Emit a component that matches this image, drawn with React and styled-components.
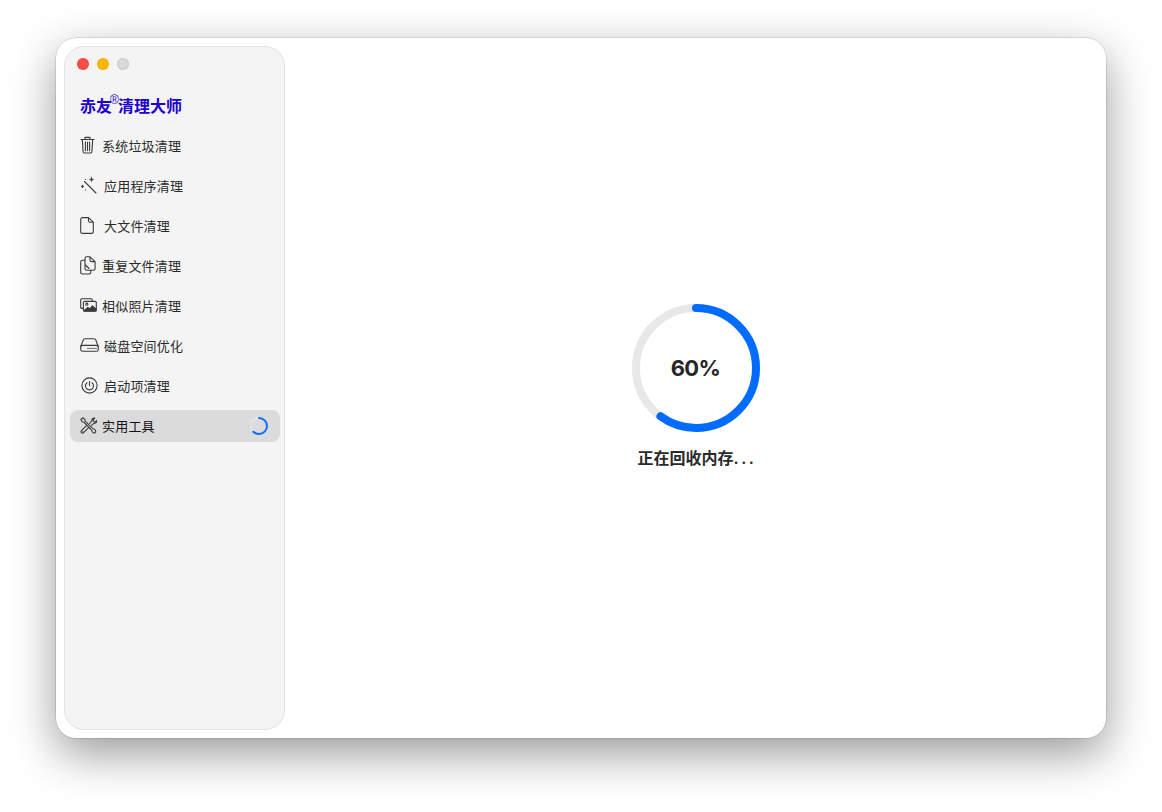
import styled, { createGlobalStyle } from "styled-components";

const GlobalStyle = createGlobalStyle`
  html, body {
    margin: 0;
    padding: 0;
    background: #fff;
  }
  body {
    font-family: "Inter", "Noto Sans CJK SC", sans-serif;
  }
`;
const Page = styled.div`
  width: 1162px;
  height: 812px;
  padding: 38px 56px;
  box-sizing: border-box;
  overflow: hidden;
`;
const Window = styled.div`
  width: 1050px;
  height: 700px;
  padding: 8px;
  box-sizing: border-box;
  display: flex;
  background: #fff;
  border-radius: 20px;
  box-shadow: 0 0 0 0.5px rgba(0, 0, 0, 0.2), 0 16px 46px rgba(0, 0, 0, 0.4);
`;
const Sidebar = styled.aside`
  width: 221px;
  height: 684px;
  box-sizing: border-box;
  flex: none;
  padding: 11px 4px 0 5px;
  background: #f4f4f4;
  border: 1px solid #e2e2e2;
  border-radius: 20px;
`;
const Lights = styled.div`
  display: flex;
  gap: 8px;
  padding-left: 7px;
`;
const Light = styled.span`
  width: 12px;
  height: 12px;
  border-radius: 50%;
  box-sizing: border-box;
  background: ${(props) => props.color};
  border: 0.5px solid rgba(0, 0, 0, 0.08);
`;
const Title = styled.h1`
  margin: 23px 0 0;
  padding-left: 10px;
  height: 24px;
  display: flex;
  align-items: center;
  color: #2200cc;
  font-size: 16px;
  font-weight: 700;
  font-family: "Inter", "Noto Sans CJK SC", sans-serif;
  white-space: nowrap;
  sup {
    width: 7px;
    margin-left: -2px;
    margin-right: 1px;
    font-family: "Liberation Sans", sans-serif;
    font-size: 12px;
    font-weight: 400;
    line-height: 1;
    margin-top: -11px;
  }
`;
const Nav = styled.nav`
  display: flex;
  flex-direction: column;
  gap: 8px;
  margin-top: 13px;
`;
const Row = styled.div`
  height: 32px;
  box-sizing: border-box;
  display: flex;
  align-items: center;
  padding: 0 11px 2px 10px;
  border-radius: 8px;
  font-size: 13px;
  letter-spacing: 0.2px;
  color: ${(props) => (props.active ? "#111" : "#2b2b2b")};
  background: ${(props) => (props.active ? "#dbdbdb" : "transparent")};
`;
const IconSlot = styled.span`
  width: ${(props) => (props.wide ? 24 : 22)}px;
  flex: none;
  display: flex;
  align-items: center;
  svg {
    display: block;
    fill: none;
    stroke: #3a3a3a;
    stroke-width: 1.1;
    stroke-linecap: round;
    stroke-linejoin: round;
  }
`;
const Label = styled.span`
  flex: 1;
  white-space: nowrap;
`;
const Spinner = styled.svg`
  width: 20px;
  height: 20px;
  flex: none;
  margin-top: 2px;
`;
const Main = styled.main`
  flex: 1;
  display: flex;
  flex-direction: column;
  align-items: center;
  justify-content: center;
  padding: 0 0 2px 8px;
`;
const Ring = styled.div`
  position: relative;
  width: 128px;
  height: 128px;
  svg {
    display: block;
  }
`;
const Percent = styled.div`
  position: absolute;
  inset: 0;
  display: flex;
  align-items: center;
  justify-content: center;
  font-size: 22px;
  font-weight: 700;
  letter-spacing: -0.6px;
  color: #262626;
`;
const Status = styled.div`
  margin-top: 14px;
  padding-left: 3px;
  font-size: 16px;
  font-weight: 600;
  line-height: 24px;
  color: #2a2a2a;
  span {
    letter-spacing: 2.5px;
  }
`;

const TrashIcon = () => (
  <svg width="15" height="18" viewBox="0 0 15 18">
    <path d="M1 3.5h13M5 3.5V1.4h5v2.1M2.3 3.5l.8 12.3c0 .7.5 1.2 1.2 1.2h6.4c.7 0 1.2-.5 1.2-1.2l.8-12.3M5.4 6v8.6M7.5 6v8.6M9.6 6v8.6" />
  </svg>
);
const WandIcon = () => (
  <svg width="17" height="18" viewBox="0 0 17 18">
    <path d="M4.5 5.5L16 17" />
    <path d="M11.5 1.2c.3 1.6.7 2 2.2 2.3-1.5.3-1.9.7-2.2 2.3-.3-1.6-.7-2-2.2-2.3 1.5-.3 1.9-.7 2.2-2.3z" fill="#3a3a3a" strokeWidth=".5" />
    <path d="M2.5 9.2v2.2M1.4 10.3h2.2M5.5 14h.1M5.5 3.5h.1" />
  </svg>
);
const FileIcon = () => (
  <svg width="14" height="17" viewBox="0 0 14 17">
    <path d="M8.5 .6H2.4C1.4.6.7 1.3.7 2.3v12.4c0 1 .7 1.7 1.7 1.7h9.2c1 0 1.7-.7 1.7-1.7V5.2L8.5.6zM8.5.6v3.2c0 .8.6 1.4 1.4 1.4h3.4" />
  </svg>
);
const FilesIcon = () => (
  <svg width="16" height="19" viewBox="0 0 16 19">
    <path d="M5 4.2H2.4c-1 0-1.7.7-1.7 1.7v10.4c0 1 .7 1.7 1.7 1.7h6.7c1 0 1.7-.7 1.7-1.7v-2" />
    <path d="M10 .8H6.6c-1 0-1.6.7-1.6 1.7v10c0 1 .6 1.7 1.6 1.7h6.8c1 0 1.7-.7 1.7-1.7V5.6L10 .8zM10 .8v3.3c0 .8.6 1.5 1.4 1.5h3.7M5 8.5l4 4" />
  </svg>
);
const PhotosIcon = () => (
  <svg width="17" height="14" viewBox="0 0 17 14">
    <path d="M3 10.4H1.9c-.7 0-1.2-.5-1.2-1.2V1.9C.7 1.2 1.2.7 1.9.7h9.2c.7 0 1.2.5 1.2 1.2v1" />
    <rect x="3.4" y="3.4" width="12.9" height="9.9" rx="1.2" />
    <circle cx="6.8" cy="6.2" r="1.1" />
    <path d="M3.8 12.9l4-3.4 2 1.4 2.6-3 3.5 3v2z" fill="#3a3a3a" />
  </svg>
);
const DiskIcon = () => (
  <svg width="19" height="14" viewBox="0 0 19 14">
    <path d="M.7 8.6L3.2 2c.3-.8.9-1.2 1.7-1.2h9.2c.8 0 1.4.4 1.7 1.2l2.5 6.6" />
    <rect x=".7" y="7.4" width="17.6" height="5.8" rx="1.8" />
    <path d="M8 10.4h.1M10 10.4h.1M12 10.4h.1M14 10.4h.1M16 10.4h.1" strokeWidth="1.3" />
  </svg>
);
const PowerIcon = () => (
  <svg width="17" height="17" viewBox="0 0 17 17" style={{ marginLeft: 1 }}>
    <circle cx="8.5" cy="8.5" r="7.6" />
    <path d="M8.5 4.6v4M6 5.8a4 4 0 1 0 5 0" />
  </svg>
);
const ToolsIcon = () => (
  <svg width="17" height="17" viewBox="0 0 17 17">
    <path d="M2.6.8L.8 2.6l1.4 2.2 1.6.4 7.6 7.6c.1 1.2 1 2.6 2.4 3.2 1 .3 1.8-.4 1.9-1.3.1-1.4-1.4-2.9-2.9-3L5.2 4.1 4.8 2.3 2.6.8z" />
    <path d="M9.6 6.4l2.2-2.2c-.4-1.8 1-3.5 3-3.2l-1.6 1.7.4 1.8 1.8.4 1.6-1.6c.2 2-1.4 3.4-3.2 3L11.6 8.4M6.6 8.6L1.8 13.2c-.9.9-.9 1.8-.3 2.4.6.6 1.6.6 2.4-.2l4.7-4.7" />
    <path d="M2.9 14.3h.1" />
  </svg>
);

const items = [
  { name: "系统垃圾清理", icon: <TrashIcon /> },
  { name: "应用程序清理", icon: <WandIcon />, wide: true },
  { name: "大文件清理", icon: <FileIcon />, wide: true },
  { name: "重复文件清理", icon: <FilesIcon /> },
  { name: "相似照片清理", icon: <PhotosIcon /> },
  { name: "磁盘空间优化", icon: <DiskIcon />, wide: true },
  { name: "启动项清理", icon: <PowerIcon />, wide: true },
];

const circ = 2 * Math.PI * 60;

function App() {
  return (
    <Page>
      <GlobalStyle />
      <Window>
        <Sidebar>
          <Lights>
            <Light color="#ff4b42" />
            <Light color="#ffb800" />
            <Light color="#d9d9d9" />
          </Lights>
          <Title>
            赤友<sup>®</sup>清理大师
          </Title>
          <Nav>
            {items.map((item) => (
              <Row key={item.name}>
                <IconSlot wide={item.wide}>{item.icon}</IconSlot>
                <Label>{item.name}</Label>
              </Row>
            ))}
            <Row active>
              <IconSlot>
                <ToolsIcon />
              </IconSlot>
              <Label>实用工具</Label>
              <Spinner viewBox="0 0 20 20">
                <circle cx="10" cy="10" r="8" fill="none" stroke="#e6e6e6" strokeWidth="2" />
                <circle
                  cx="10"
                  cy="10"
                  r="8"
                  fill="none"
                  stroke="#0a6cff"
                  strokeWidth="2"
                  strokeLinecap="round"
                  strokeDasharray={`${2 * Math.PI * 8 * 0.62} 100`}
                  transform="rotate(-90 10 10)"
                />
              </Spinner>
            </Row>
          </Nav>
        </Sidebar>
        <Main>
          <Ring>
            <svg width="128" height="128" viewBox="0 0 128 128">
              <circle cx="64" cy="64" r="60" fill="none" stroke="#e8e8e8" strokeWidth="8" />
              <circle
                cx="64"
                cy="64"
                r="60"
                fill="none"
                stroke="#006cff"
                strokeWidth="8"
                strokeLinecap="round"
                strokeDasharray={`${circ * 0.6} ${circ}`}
                transform="rotate(-90 64 64)"
              />
            </svg>
            <Percent>60%</Percent>
          </Ring>
          <Status>
            正在回收内存<span>...</span>
          </Status>
        </Main>
      </Window>
    </Page>
  );
}

export default App;
